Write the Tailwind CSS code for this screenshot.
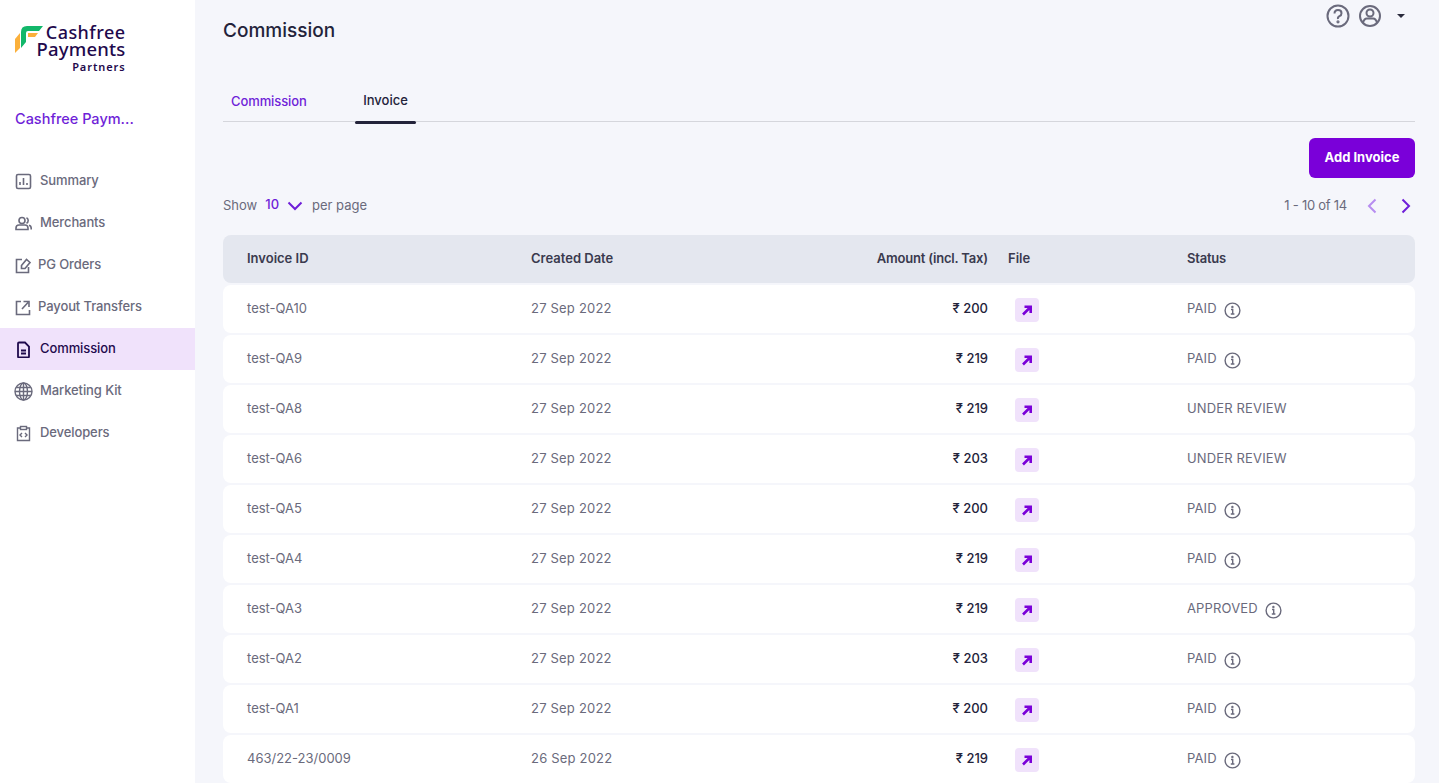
<!DOCTYPE html>
<html lang="en">
<head>
    <meta charset="UTF-8">
    <meta name="viewport" content="width=device-width, initial-scale=1.0">
    <title>Commission</title>
    <script src="https://cdn.jsdelivr.net/npm/@tailwindcss/browser@4"></script>
</head>
<body class="bg-[#f5f6fb] font-['Inter',sans-serif] text-[13px] text-[#6a6a7c]">
    <div class="flex h-[783px] overflow-hidden">
        <!-- Sidebar -->
        <aside class="w-[195px] shrink-0 bg-white">
            <div class="relative h-[100px]">
                <svg class="absolute left-[15px] top-[25px]" width="30" height="30" viewBox="0 0 30 30">
                    <path d="M0 14 L5 8 V23 L0 28 Z" fill="#fbb03b"/>
                    <path d="M6 7 Q6 1 12 1 H28 L24 6 H13 Q11 6 11 8 V17 L6 23 Z" fill="#12b76a"/>
                    <path d="M13 8 H23 L20 12 H13 Z" fill="#fbb03b"/>
                </svg>
                <div class="absolute left-0 top-[24px] w-[125.5px] text-right text-[#1f0a4d] font-['Noto_Sans',sans-serif]">
                    <div class="text-[18px] font-medium leading-[17px] tracking-[0.45px]">Cashfree</div>
                    <div class="text-[18.5px] font-medium leading-[15px] tracking-[0.2px]">Payments</div>
                    <div class="mt-[4px] text-[11px] font-semibold leading-[14px] tracking-[0.9px]">Partners</div>
                </div>
            </div>
            <div class="mt-[8px] pl-[15px] text-[14.5px] font-medium leading-[22px] text-[#6f1fd8]">Cashfree Paym...</div>
            <nav class="mt-[30px] font-medium tracking-[-0.1px]">
                <a class="flex h-[42px] items-center gap-[8px] pl-[15px]">
                    <svg width="17" height="17" viewBox="0 0 17 17" fill="none" stroke="#6a6a7c" stroke-width="1.6"><rect x="1.5" y="1.5" width="14" height="14" rx="1.5"/><path d="M5 12V9M8.5 12V5M12 12V10"/></svg>
                    <span>Summary</span>
                </a>
                <a class="flex h-[42px] items-center gap-[8px] pl-[15px]">
                    <svg width="17" height="17" viewBox="0 0 17 17" fill="none" stroke="#6a6a7c" stroke-width="1.6"><circle cx="7" cy="5.5" r="3"/><path d="M1 14.5V13q0-3 3-3h6q3 0 3 3v1.5zM11.5 2.8a3 3 0 0 1 0 5.4M14 10.2q2.2.6 2.2 3v1.3"/></svg>
                    <span>Merchants</span>
                </a>
                <a class="flex h-[42px] items-center gap-[6px] pl-[15px]">
                    <svg width="17" height="17" viewBox="0 0 17 17" fill="none" stroke="#6a6a7c" stroke-width="1.6"><path d="M7 2.5H1.5v13h12V10"/><path d="M6.5 8.5 11.5 2.5 15 5.5 10 11.5H6.5z"/></svg>
                    <span>PG Orders</span>
                </a>
                <a class="flex h-[42px] items-center gap-[6px] pl-[15px]">
                    <svg width="17" height="17" viewBox="0 0 17 17" fill="none" stroke="#6a6a7c" stroke-width="1.6"><path d="M6 2.5H1.5v13h13V11"/><path d="M7 10 13 3.5M8.5 2.5H14V8"/></svg>
                    <span>Payout Transfers</span>
                </a>
                <a class="flex h-[42px] items-center gap-[8px] bg-[#f0e2fb] pl-[15px] text-[#1f0a4d]">
                    <svg width="17" height="17" viewBox="0 0 17 17" fill="none" stroke="#1f0a4d" stroke-width="1.8"><path d="M3 2.5q0-1 1-1h6l4 4v10q0 1-1 1H4q-1 0-1-1z"/><path d="M6 9.5h5M6 12.5h5"/></svg>
                    <span>Commission</span>
                </a>
                <a class="flex h-[42px] items-center gap-[7px] pl-[14px]">
                    <svg width="19" height="19" viewBox="0 0 19 19" fill="none" stroke="#6a6a7c" stroke-width="1.4"><circle cx="9.5" cy="9.5" r="8.5"/><ellipse cx="9.5" cy="9.5" rx="4" ry="8.5"/><path d="M9.5 1v17M1 9.5h17M2.3 5.5h14.4M2.3 13.5h14.4"/></svg>
                    <span>Marketing Kit</span>
                </a>
                <a class="flex h-[42px] items-center gap-[8px] pl-[15px]">
                    <svg width="17" height="17" viewBox="0 0 17 17" fill="none" stroke="#6a6a7c" stroke-width="1.4"><path d="M5 3H2.5v12.5h12V3H12"/><rect x="5.5" y="1.5" width="6" height="3"/><path d="M7 8 5 10l2 2M10 8l2 2-2 2"/></svg>
                    <span>Developers</span>
                </a>
            </nav>
        </aside>

        <!-- Main -->
        <main class="min-w-0 flex-1 pl-[28px] pr-[24px]">
            <header class="flex h-[60px] items-start justify-between">
                <h1 class="mt-[18px] text-[19px] font-medium leading-[26px] text-[#23233a]">Commission</h1>
                <div class="mt-[3px] flex items-center">
                    <svg width="26" height="26" viewBox="0 0 26 26" fill="none" stroke="#6a6a7c" stroke-width="2"><circle cx="13" cy="13" r="10.5"/><path d="M9.5 10.5q0-3.5 3.5-3.5t3.5 3.2q0 2-2 3t-1.5 2.8"/><circle cx="13" cy="18.8" r=".6" fill="#6a6a7c"/></svg>
                    <svg class="ml-[6px] -mt-[1px]" width="26" height="26" viewBox="0 0 26 26" fill="none" stroke="#6a6a7c" stroke-width="2"><circle cx="13" cy="13" r="10"/><circle cx="13" cy="10" r="3.5"/><path d="M6 20q1-4.5 4-4.5h6q3 0 4 4.5"/></svg>
                    <div class="ml-[14px] mr-[10px] h-0 w-0 border-x-[4px] border-t-[4px] border-x-transparent border-t-[#2a2a3c]"></div>
                </div>
            </header>

            <div class="flex h-[62px] items-end border-b border-[#d5d6dc]">
                <div class="w-[132px] pb-[11px] pl-[8px] font-medium leading-[18px] tracking-[-0.1px] text-[#6f1fd8]">Commission</div>
                <div class="relative w-[61px] pb-[12px] text-center font-medium leading-[18px] text-[#23233a]">
                    Invoice
                    <div class="absolute bottom-[-3px] left-0 h-[3px] w-full rounded-full bg-[#23233a]"></div>
                </div>
            </div>

            <div class="mt-[16px] flex justify-end">
                <button class="h-[40px] w-[106px] rounded-[6px] bg-[#7a00d9] text-[13px] font-bold text-white">Add Invoice</button>
            </div>

            <div class="mt-[18px] flex h-[20px] items-center justify-between">
                <div class="flex items-center">
                    <span>Show</span>
                    <span class="ml-[8px] -mt-[2px] font-medium text-[#6f1fd8]">10</span>
                    <svg class="ml-[8px]" width="16" height="10" viewBox="0 0 16 10" fill="none" stroke="#6f1fd8" stroke-width="2"><path d="M1.5 1.5 8 8l6.5-6.5"/></svg>
                    <span class="ml-[9px]">per page</span>
                </div>
                <div class="flex items-center">
                    <span class="tracking-[-0.25px]">1 - 10 of 14</span>
                    <svg class="ml-[20px]" width="10" height="16" viewBox="0 0 10 16" fill="none" stroke="#b78df0" stroke-width="2"><path d="M8.5 1.5 2 8l6.5 6.5"/></svg>
                    <svg class="ml-[24px] mr-[4px]" width="10" height="16" viewBox="0 0 10 16" fill="none" stroke="#6f1fd8" stroke-width="2"><path d="M1.5 1.5 8 8l-6.5 6.5"/></svg>
                </div>
            </div>

            <!-- Table -->
            <div class="mt-[19px] grid h-[48px] grid-cols-[284px_200px_257px_199px_1fr] items-center rounded-[8px] bg-[#e4e7ef] px-[24px] font-semibold text-[#3a3a4e]">
                <div>Invoice ID</div>
                <div>Created Date</div>
                <div class="text-right tracking-[-0.18px]">Amount (incl. Tax)</div>
                <div class="pl-[20px]">File</div>
                <div class="tracking-[-0.2px]">Status</div>
            </div>
            <div id="rows" class="mt-[2px] space-y-[2px]"></div>
        </main>
    </div>

    <script>
        const invoices = [
            ['test-QA10', '27 Sep 2022', '200', 'PAID', true],
            ['test-QA9', '27 Sep 2022', '219', 'PAID', true],
            ['test-QA8', '27 Sep 2022', '219', 'UNDER REVIEW', false],
            ['test-QA6', '27 Sep 2022', '203', 'UNDER REVIEW', false],
            ['test-QA5', '27 Sep 2022', '200', 'PAID', true],
            ['test-QA4', '27 Sep 2022', '219', 'PAID', true],
            ['test-QA3', '27 Sep 2022', '219', 'APPROVED', true],
            ['test-QA2', '27 Sep 2022', '203', 'PAID', true],
            ['test-QA1', '27 Sep 2022', '200', 'PAID', true],
            ['463/22-23/0009', '26 Sep 2022', '219', 'PAID', true]
        ];

        const infoIcon = `<svg class="ml-[7px] mt-[2px]" width="17" height="17" viewBox="0 0 17 17" fill="none" stroke="#6a6a7c" stroke-width="1.4"><circle cx="8.5" cy="8.5" r="7.4"/><path d="M7 7.5h1.7v4.5M6.8 12h3.6" /><circle cx="8.4" cy="5" r=".5" fill="#6a6a7c"/></svg>`;

        document.getElementById('rows').innerHTML = invoices.map(([id, date, amount, status, info]) => `
            <div class="grid h-[48px] grid-cols-[284px_200px_257px_199px_1fr] items-center rounded-[8px] bg-white px-[24px]">
                <div>${id}</div>
                <div class="tracking-[0.2px]">${date}</div>
                <div class="text-right font-medium text-[#23233a]">₹ ${amount}</div>
                <div class="pl-[27px]">
                    <div class="mt-[2px] flex h-[24px] w-[24px] items-center justify-center rounded-[4px] bg-[#f0e2fb]">
                        <svg width="12" height="12" viewBox="0 0 12 12" fill="none" stroke="#7a00d9" stroke-width="2.6"><path d="M2 10.5 9 3.5M3.5 2.8h6.2V9"/></svg>
                    </div>
                </div>
                <div class="flex items-center tracking-[0.15px]">${status}${info ? infoIcon : ''}</div>
            </div>
        `).join('');
    </script>
</body>
</html>
